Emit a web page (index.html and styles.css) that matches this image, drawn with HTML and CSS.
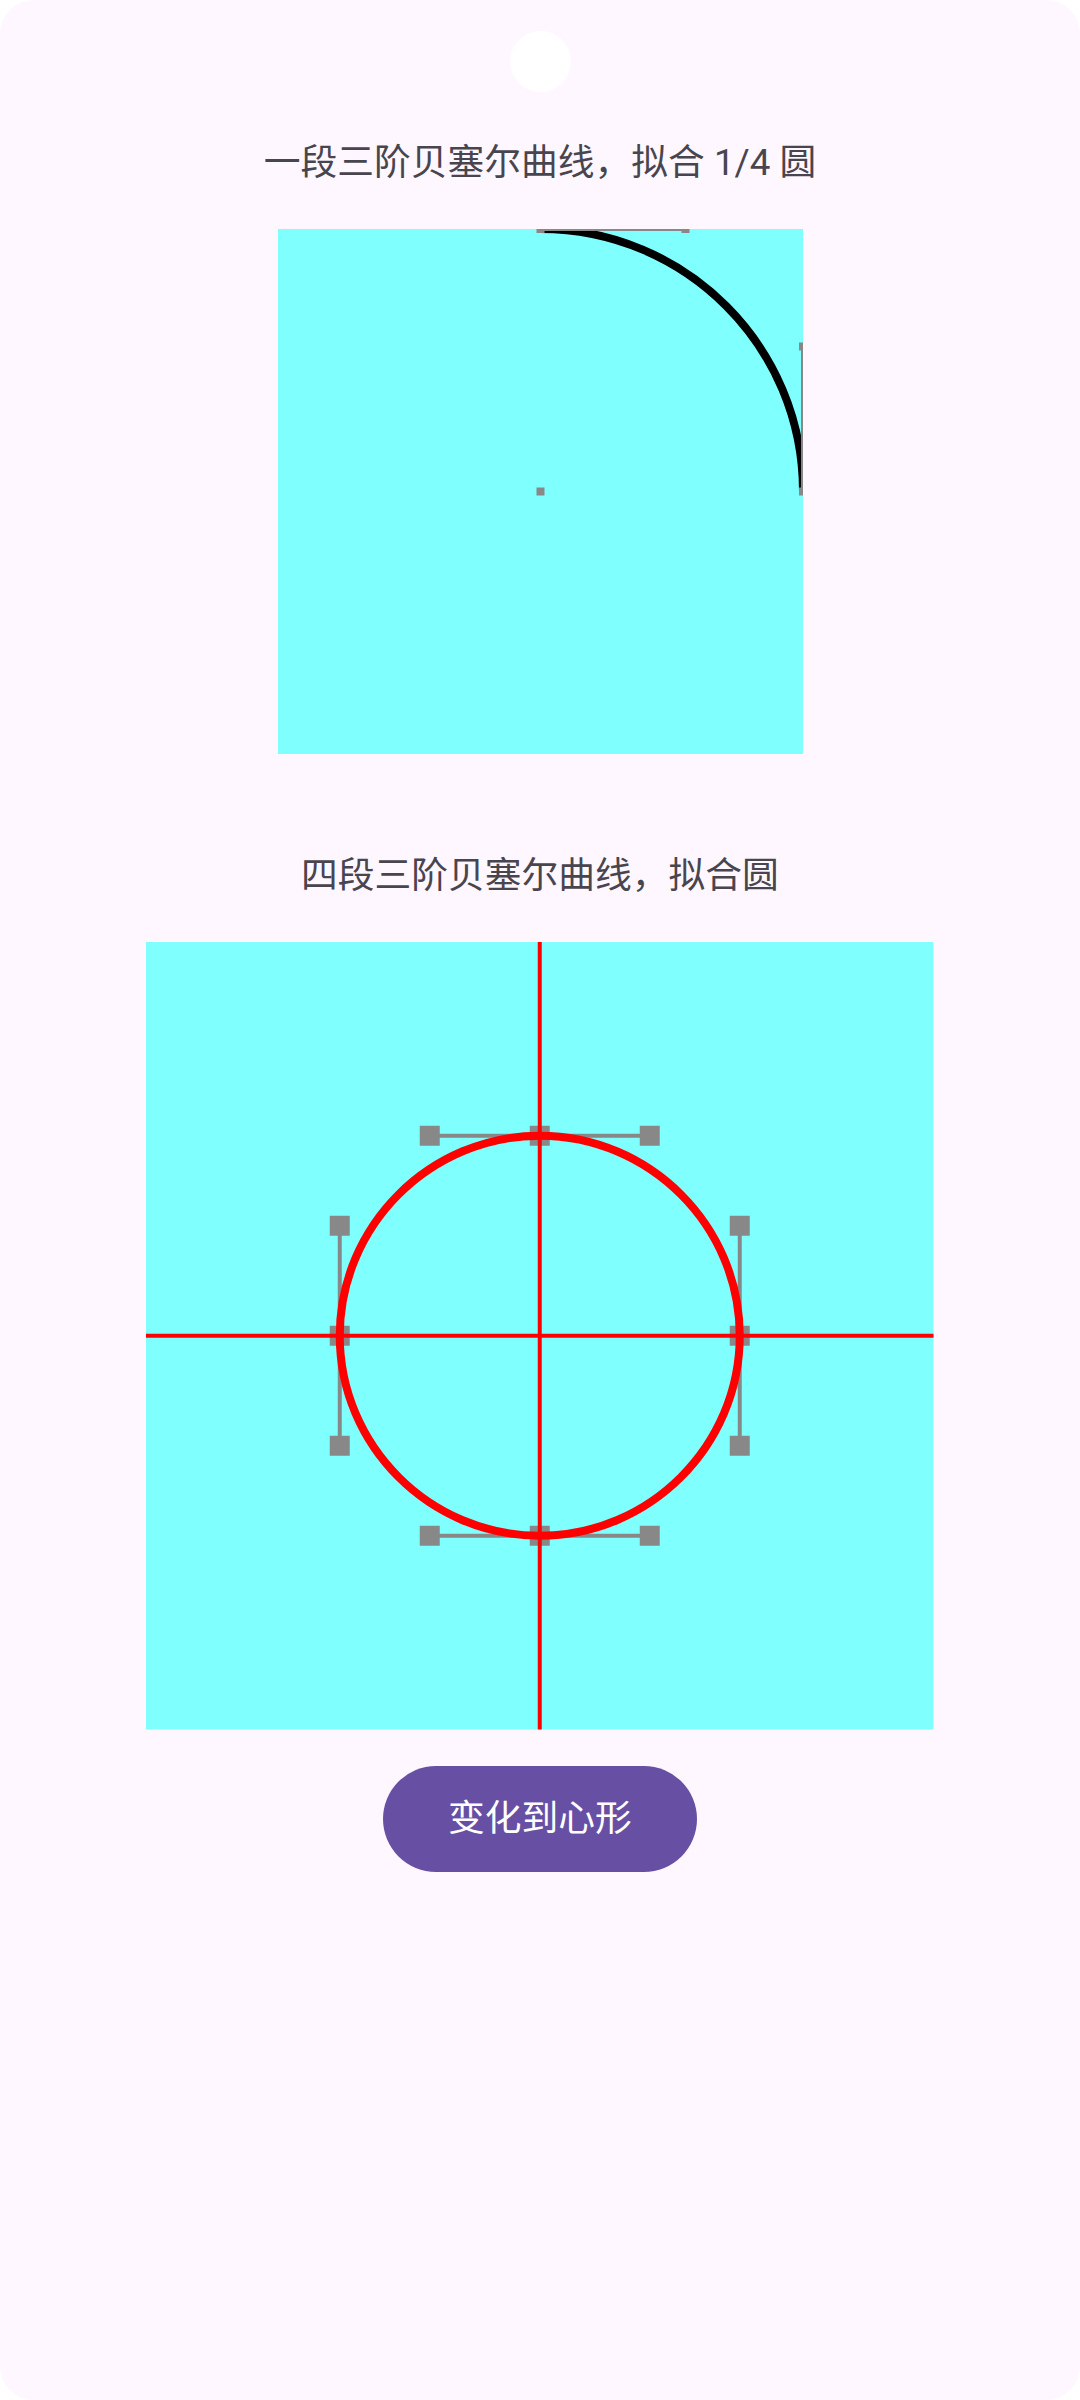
FILE: index.html
```html
<!DOCTYPE html>
<html lang="zh">
<head>
<meta charset="utf-8">
<title>贝塞尔曲线</title>
<link rel="stylesheet" href="styles.css">
</head>
<body>
<div class="screen">
  <div class="cutout"></div>
  <div class="title title-first">一段三阶贝塞尔曲线，拟合 1/4 圆</div>
  <svg class="canvas canvas-small" width="525" height="525" viewBox="0 0 525 525">
    <rect class="bg" x="0" y="0" width="525" height="525"/>
    <path class="arc" d="M262.5 0 C407.5 0 525 117.5 525 262.5"/>
    <line class="handle" x1="262.5" y1="0" x2="407.5" y2="0"/>
    <line class="handle" x1="525" y1="262.5" x2="525" y2="117.5"/>
    <rect class="pt" x="258.5" y="-4" width="8" height="8"/>
    <rect class="pt" x="403.5" y="-4" width="8" height="8"/>
    <rect class="pt" x="521" y="113.5" width="8" height="8"/>
    <rect class="pt" x="521" y="258.5" width="8" height="8"/>
    <rect class="pt" x="258.5" y="258.5" width="8" height="8"/>
  </svg>
  <div class="title title-second">四段三阶贝塞尔曲线，拟合圆</div>
  <svg class="canvas canvas-large" width="787.5" height="787.5" viewBox="0 0 787.5 787.5">
    <rect class="bg" x="0" y="0" width="787.5" height="787.5"/>
    <line class="handle2" x1="283.75" y1="193.75" x2="503.75" y2="193.75"/>
    <line class="handle2" x1="283.75" y1="593.75" x2="503.75" y2="593.75"/>
    <line class="handle2" x1="193.75" y1="283.75" x2="193.75" y2="503.75"/>
    <line class="handle2" x1="593.75" y1="283.75" x2="593.75" y2="503.75"/>
    <rect class="pt" x="273.75" y="183.75" width="20" height="20"/>
    <rect class="pt" x="383.75" y="183.75" width="20" height="20"/>
    <rect class="pt" x="493.75" y="183.75" width="20" height="20"/>
    <rect class="pt" x="273.75" y="583.75" width="20" height="20"/>
    <rect class="pt" x="383.75" y="583.75" width="20" height="20"/>
    <rect class="pt" x="493.75" y="583.75" width="20" height="20"/>
    <rect class="pt" x="183.75" y="273.75" width="20" height="20"/>
    <rect class="pt" x="183.75" y="383.75" width="20" height="20"/>
    <rect class="pt" x="183.75" y="493.75" width="20" height="20"/>
    <rect class="pt" x="583.75" y="273.75" width="20" height="20"/>
    <rect class="pt" x="583.75" y="383.75" width="20" height="20"/>
    <rect class="pt" x="583.75" y="493.75" width="20" height="20"/>
    <line class="axis" x1="393.75" y1="0" x2="393.75" y2="787.5"/>
    <line class="axis" x1="0" y1="393.75" x2="787.5" y2="393.75"/>
    <path class="circle" d="M393.75 193.75 C503.75 193.75 593.75 283.75 593.75 393.75 C593.75 503.75 503.75 593.75 393.75 593.75 C283.75 593.75 193.75 503.75 193.75 393.75 C193.75 283.75 283.75 193.75 393.75 193.75 Z"/>
  </svg>
  <button class="morph-btn" type="button">变化到心形</button>
</div>
</body>
</html>
```
FILE: styles.css
```css
html, body {
  margin: 0;
  padding: 0;
  background: #ffffff;
}
.screen {
  position: relative;
  width: 1080px;
  height: 2400px;
  background: #fef7ff;
  border-radius: 34px;
  overflow: hidden;
  display: flex;
  flex-direction: column;
  align-items: center;
  font-family: Roboto, "Noto Sans CJK SC", sans-serif;
}
.cutout {
  position: absolute;
  top: 31px;
  left: 510px;
  width: 61px;
  height: 61px;
  border-radius: 50%;
  background: #ffffff;
}
.title {
  font-size: 36.75px;
  line-height: 52px;
  color: #49454f;
  white-space: nowrap;
}
.title-first {
  margin-top: 137px;
}
.title-second {
  margin-top: 96px;
}
.canvas {
  display: block;
  margin-top: 40px;
  flex: none;
}
.bg {
  fill: #80ffff;
}
.arc {
  fill: none;
  stroke: #000000;
  stroke-width: 8;
}
.handle {
  stroke: #888888;
  stroke-width: 4;
}
.handle2 {
  stroke: #888888;
  stroke-width: 4;
}
.pt {
  fill: #888888;
}
.axis {
  stroke: #ff0000;
  stroke-width: 4;
}
.circle {
  fill: none;
  stroke: #ff0000;
  stroke-width: 8;
}
.morph-btn {
  margin-top: 36px;
  height: 106px;
  padding: 0 65px;
  border: none;
  border-radius: 53px;
  background: #6750a4;
  color: #ffffff;
  font-family: Roboto, "Noto Sans CJK SC", sans-serif;
  font-size: 36.75px;
  font-weight: 400;
  line-height: 52px;
}
```
